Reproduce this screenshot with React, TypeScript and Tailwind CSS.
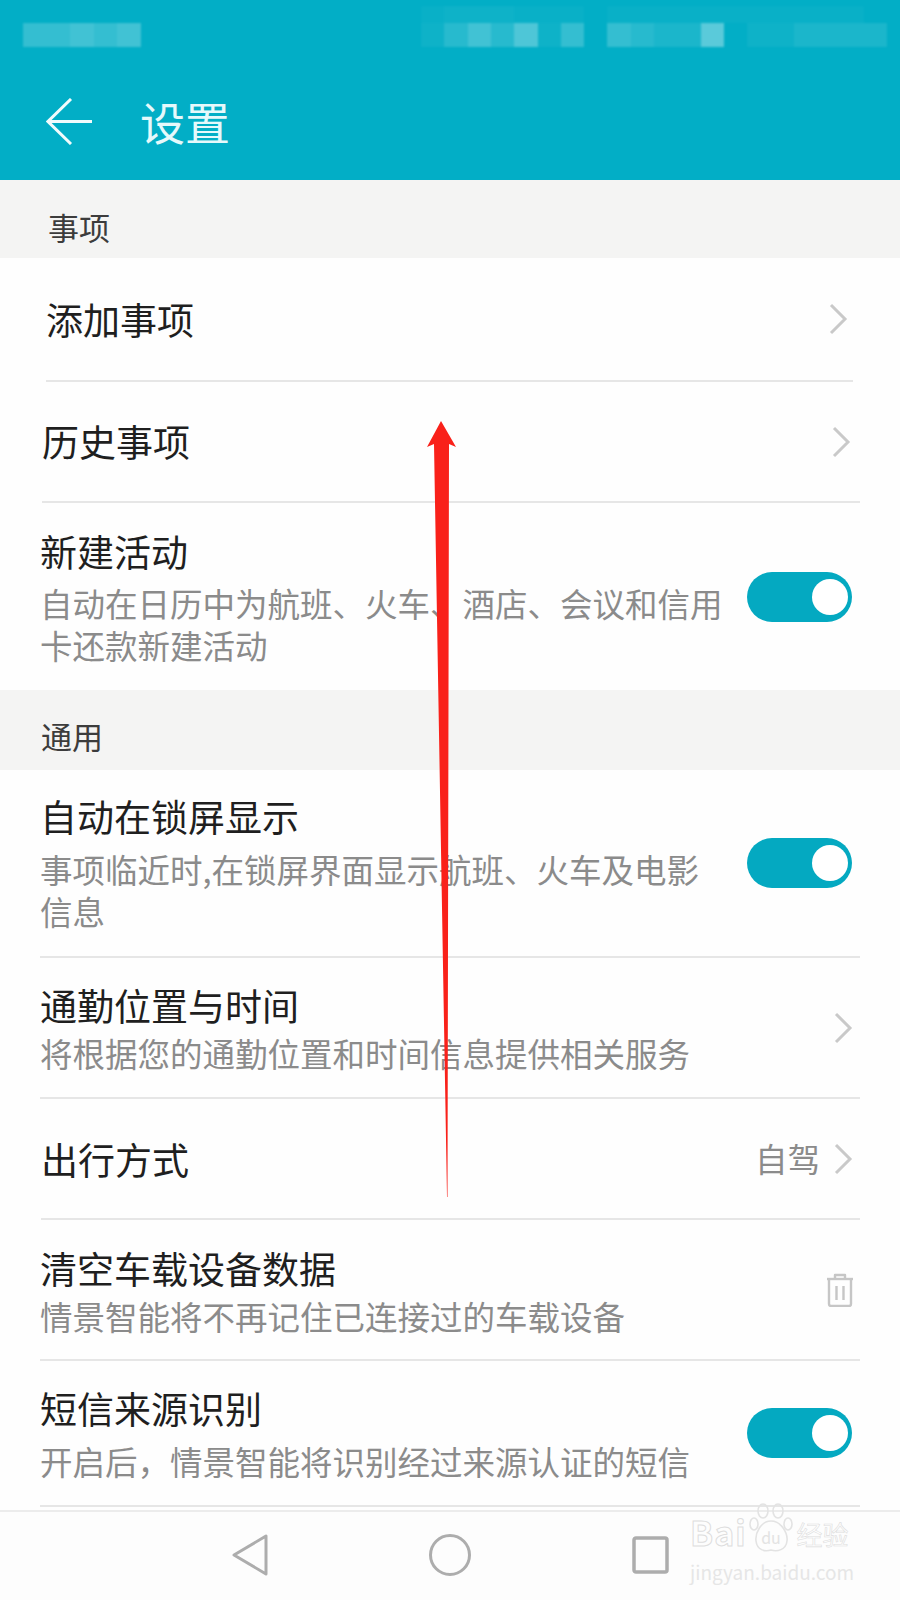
import type { ReactNode } from 'react';

const LEFT_BARS = ['bg-white/20', 'bg-white/20', 'bg-white/25', 'bg-white/20', 'bg-white/25'];
const RIGHT_TOP = [
    'bg-white/[0.03]', 'bg-white/5', 'bg-white/5', 'bg-white/5', 'bg-white/[0.03]', 'bg-white/[0.03]', 'bg-white/[0.03]', 'bg-transparent', 'bg-white/[0.03]', 'bg-white/[0.03]',
    'bg-white/[0.03]', 'bg-white/[0.03]', 'bg-white/[0.03]', 'bg-white/[0.03]', 'bg-white/[0.03]', 'bg-white/[0.03]', 'bg-white/[0.03]', 'bg-white/[0.03]', 'bg-white/[0.03]', 'bg-transparent',
];
const RIGHT_BOTTOM = [
    'bg-white/5', 'bg-white/15', 'bg-white/25', 'bg-white/15', 'bg-white/30', 'bg-white/5', 'bg-white/20', 'bg-transparent', 'bg-white/20', 'bg-white/15',
    'bg-white/10', 'bg-white/10', 'bg-white/35', 'bg-transparent', 'bg-white/5', 'bg-white/5', 'bg-white/10', 'bg-white/10', 'bg-white/10', 'bg-white/10',
];

function Chevron() {
    return (
        <svg width="19" height="32" viewBox="0 0 19 32" fill="none" stroke="#c9c9c9" strokeWidth="3">
            <polyline points="2,2 16,16 2,30" />
        </svg>
    );
}

function Trash() {
    return (
        <svg width="28" height="34" viewBox="0 0 28 34" fill="none" stroke="#c6c6c6" strokeWidth="2.4" strokeLinejoin="round">
            <path d="M1 6 H27" />
            <path d="M9 6 V2 H19 V6" />
            <path d="M3 6 V31 Q3 33 5 33 H23 Q25 33 25 31 V6" />
            <path d="M10.5 13 V27 M17.5 13 V27" />
        </svg>
    );
}

function Toggle() {
    return (
        <div className="flex h-[50px] w-[105px] items-center justify-end rounded-full bg-[#04a9c1] pr-1">
            <div className="h-9 w-9 rounded-full bg-white" />
        </div>
    );
}

function Section({ label, className }: { label: string; className: string }) {
    return (
        <div className={`flex items-center bg-[#f4f4f3] text-[31px] leading-none text-[#3c3c3c] ${className}`}>
            {label}
        </div>
    );
}

function Row({
    title,
    sub,
    right,
    className,
    textClass,
    subClass,
}: {
    title: string;
    sub?: string;
    right: ReactNode;
    className: string;
    textClass: string;
    subClass?: string;
}) {
    return (
        <div className={`flex justify-between ${className}`}>
            <div className={`w-[686px] ${textClass}`}>
                <div className="text-[37px] leading-[42px] text-[#1f1f1f]">{title}</div>
                {sub && <div className={`text-[32.5px] leading-[42px] text-[#8b8b8b] ${subClass ?? ''}`}>{sub}</div>}
            </div>
            <div className="flex items-center">{right}</div>
        </div>
    );
}

export default function App() {
    return (
        <div
            lang="zh-CN"
            className="relative h-[1600px] w-[900px] overflow-hidden bg-[#fefefe] font-['Noto_Sans_CJK_SC','Noto_Sans',sans-serif]"
        >
            <header className="h-[180px] bg-[#02aec6]">
                <div className="flex h-[47px] items-end justify-between pl-[23px] pr-[13px] blur-[1px]">
                    <div className="flex">
                        {LEFT_BARS.map((c, i) => (
                            <div key={i} className={`h-6 w-[23.5px] ${c}`} />
                        ))}
                    </div>
                    <div className="flex flex-col">
                        <div className="flex">
                            {RIGHT_TOP.map((c, i) => (
                                <div key={i} className={`h-[17px] w-[23.3px] ${c}`} />
                            ))}
                        </div>
                        <div className="flex">
                            {RIGHT_BOTTOM.map((c, i) => (
                                <div key={i} className={`h-6 w-[23.3px] ${c}`} />
                            ))}
                        </div>
                    </div>
                </div>
                <div className="flex items-center pl-[46px] pt-[51px]">
                    <svg width="47" height="47" viewBox="0 0 47 47" fill="none" stroke="#f1fbfc" strokeWidth="3">
                        <path d="M25 1 L2 23.5 L25 46 M2 23.5 H46" />
                    </svg>
                    <div className="ml-[47px] text-[45px] leading-[47px] text-[#e6f9fb]">设置</div>
                </div>
            </header>

            <Section label="事项" className="h-[78px] pt-[14px] pl-[48px]" />
            <Row
                title="添加事项"
                right={<Chevron />}
                className="ml-[46px] mr-[47px] h-[124px] border-b-2 border-[#e6e6e6] pr-[5px]"
                textClass="pt-[40px]"
            />
            <Row
                title="历史事项"
                right={<Chevron />}
                className="ml-[42px] mr-[40px] h-[121px] border-b-2 border-[#e6e6e6] pr-[9px]"
                textClass="pt-[38px]"
            />
            <Row
                title="新建活动"
                sub="自动在日历中为航班、火车、酒店、会议和信用卡还款新建活动"
                right={<Toggle />}
                className="ml-[40px] mr-[48px] h-[187px]"
                textClass="pt-[27px]"
                subClass="mt-[10px]"
            />
            <Section label="通用" className="h-[80px] pt-[10px] pl-[41px]" />
            <Row
                title="自动在锁屏显示"
                sub="事项临近时,在锁屏界面显示航班、火车及电影信息"
                right={<Toggle />}
                className="ml-[40px] mr-[40px] h-[188px] border-b-2 border-[#e6e6e6] pr-[8px]"
                textClass="pt-[25px]"
                subClass="mt-[11px]"
            />
            <Row
                title="通勤位置与时间"
                sub="将根据您的通勤位置和时间信息提供相关服务"
                right={<Chevron />}
                className="ml-[40px] mr-[40px] h-[141px] border-b-2 border-[#e6e6e6] pr-[7px]"
                textClass="pt-[26px]"
                subClass="mt-[6px]"
            />
            <Row
                title="出行方式"
                right={
                    <div className="flex items-center gap-[14px]">
                        <span className="text-[32.5px] leading-none text-[#8b8b8b]">自驾</span>
                        <Chevron />
                    </div>
                }
                className="ml-[41px] mr-[40px] h-[121px] border-b-2 border-[#e6e6e6] pr-[7px]"
                textClass="pt-[39px]"
            />
            <Row
                title="清空车载设备数据"
                sub="情景智能将不再记住已连接过的车载设备"
                right={<Trash />}
                className="ml-[40px] mr-[40px] h-[141px] border-b-2 border-[#e6e6e6] pr-[6px]"
                textClass="pt-[27px]"
                subClass="mt-[6px]"
            />
            <Row
                title="短信来源识别"
                sub="开启后，情景智能将识别经过来源认证的短信"
                right={<Toggle />}
                className="ml-[40px] mr-[40px] h-[146px] border-b-2 border-[#e6e6e6] pr-[8px]"
                textClass="pt-[26px]"
                subClass="mt-[11px]"
            />

            <nav className="mt-[3px] flex h-[90px] items-center gap-[161px] border-t-2 border-[#ececec] bg-[#fdfdfd] pb-[3px] pl-[232px]">
                <svg width="36" height="42" viewBox="0 0 36 42" fill="none" stroke="#adadad" strokeWidth="3" strokeLinejoin="round">
                    <path d="M34 2 V40 L2 21 Z" />
                </svg>
                <svg width="42" height="42" viewBox="0 0 42 42" fill="none" stroke="#adadad" strokeWidth="3">
                    <circle cx="21" cy="21" r="19.5" />
                </svg>
                <svg width="37" height="38" viewBox="0 0 37 38" fill="none" stroke="#adadad" strokeWidth="3.5" strokeLinejoin="round">
                    <rect x="2" y="2" width="33" height="34" rx="2" />
                </svg>
            </nav>

            {/* red arrow drawn over the screenshot */}
            <svg className="absolute left-0 top-0" width="900" height="1600" viewBox="0 0 900 1600">
                <polygon points="441,421 456,447 449,444 447.5,1197 447,1197 434,444 427,447" fill="#f9211a" />
            </svg>

            {/* baidu watermark */}
            <div className="absolute left-[690px] top-[1503px] flex w-[164px] flex-col items-start text-[#e6e6e6]">
                <div className="flex items-end">
                    <span className="text-[34px] font-bold leading-[42px] tracking-[1px] text-transparent [-webkit-text-stroke:1px_#dedede]">Bai</span>
                    <svg width="50" height="50" viewBox="0 0 50 50" fill="none" stroke="#e3e3e3" strokeWidth="1.6">
                        <ellipse cx="16" cy="8" rx="5" ry="7" />
                        <ellipse cx="31" cy="8" rx="5" ry="7" />
                        <ellipse cx="7" cy="21" rx="4" ry="6" />
                        <ellipse cx="41" cy="21" rx="4" ry="6" />
                        <path d="M24 18 C14 18 8 30 9 38 C10 47 18 49 24 47 C30 49 39 47 40 38 C41 30 34 18 24 18 Z" />
                        <text x="24" y="41" textAnchor="middle" fontSize="16" fill="#e3e3e3" stroke="none">du</text>
                    </svg>
                    <span className="text-[26px] leading-[38px] text-transparent [-webkit-text-stroke:0.6px_#dedede]">经验</span>
                </div>
                <div className="mt-[8px] text-[19px] leading-[22px]">jingyan.baidu.com</div>
            </div>
        </div>
    );
}
